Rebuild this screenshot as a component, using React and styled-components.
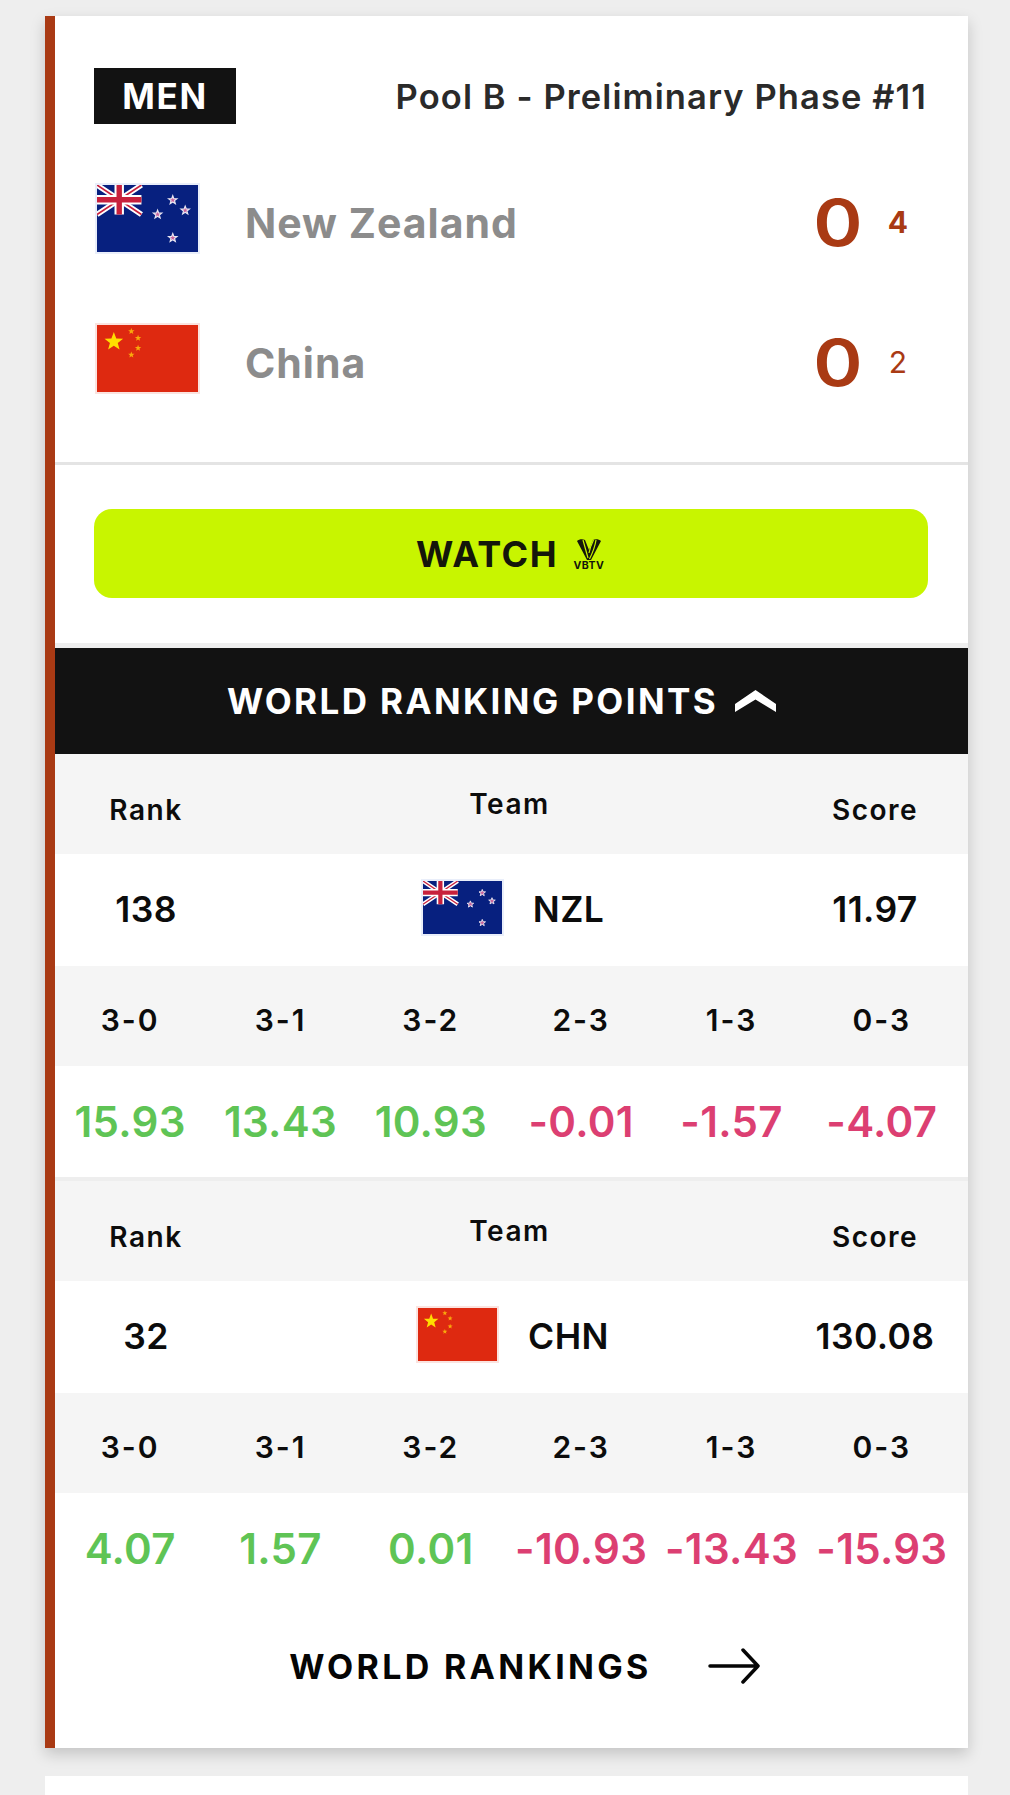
import React from 'react'
import styled, { createGlobalStyle } from 'styled-components'

const GlobalStyle = createGlobalStyle`
  html, body {
    margin: 0;
    padding: 0;
    background: #eeeeee;
  }
  * {
    box-sizing: border-box;
  }
`

const RUST = '#a93a14'

const starPoints = (cx, cy, r) => {
  const pts = []
  for (let i = 0; i < 10; i++) {
    const rad = i % 2 === 0 ? r : r * 0.42
    const a = -Math.PI / 2 + (i * Math.PI) / 5
    pts.push(`${(cx + rad * Math.cos(a)).toFixed(1)},${(cy + rad * Math.sin(a)).toFixed(1)}`)
  }
  return pts.join(' ')
}

const NzFlag = () => (
  <svg viewBox="0 0 300 200" width="100%" height="100%" preserveAspectRatio="none">
    <rect width="300" height="200" fill="#07207f" />
    <path d="M0 0L132 88M132 0L0 88" stroke="#fff" strokeWidth="16" />
    <path d="M0 0L132 88M132 0L0 88" stroke="#c8203c" strokeWidth="5" />
    <path d="M66 0V88M0 44H132" stroke="#fff" strokeWidth="28" />
    <path d="M66 0V88M0 44H132" stroke="#c8203c" strokeWidth="16" />
    {[[225, 45], [180, 88], [262, 76], [225, 158]].map(([x, y]) => (
      <polygon key={x + '-' + y} points={starPoints(x, y, 13)} fill="#c9609a" stroke="#e9e6f2" strokeWidth="3.5" />
    ))}
  </svg>
)

const CnFlag = () => (
  <svg viewBox="0 0 300 200" width="100%" height="100%" preserveAspectRatio="none">
    <rect width="300" height="200" fill="#de2910" />
    <polygon points={starPoints(50, 50, 29)} fill="#ffde00" />
    {[[102, 19], [122, 39], [122, 69], [102, 89]].map(([x, y]) => (
      <polygon key={x + '-' + y} points={starPoints(x, y, 10)} fill="#f9a90c" />
    ))}
  </svg>
)

const FlagBox = styled.div`
  flex: none;
  width: ${(p) => p.$w}px;
  height: ${(p) => p.$h}px;
  margin-bottom: ${(p) => p.$lift || 0}px;
  margin-left: ${(p) => p.$inset || 0}px;
  padding: 2px;
  background: ${(p) => p.$edge};
  line-height: 0;
`

const Page = styled.div`
  width: 1010px;
  height: 1795px;
  overflow: hidden;
  padding: 16px 42px 0 45px;
  font-family: Inter, "Liberation Sans", sans-serif;
`

const Card = styled.div`
  background: #fff;
  border-left: 10px solid ${RUST};
  box-shadow: 0 6px 14px rgba(0, 0, 0, 0.18);
`

const NextCard = styled.div`
  margin-top: 28px;
  height: 60px;
  background: #fff;
`

const Match = styled.div`
  padding: 52px 41px 34px 39px;
`

const MatchTop = styled.div`
  display: flex;
  justify-content: space-between;
  align-items: center;
  margin-bottom: 24px;
`

const GenderTag = styled.div`
  width: 142px;
  height: 56px;
  display: flex;
  align-items: center;
  justify-content: center;
  background: #121212;
  color: #fff;
  font-size: 35px;
  font-weight: 700;
  letter-spacing: 1.6px;
`

const PoolLabel = styled.div`
  font-size: 34.5px;
  font-weight: 600;
  letter-spacing: 1.1px;
  color: #2a2a2a;
`

const TeamRow = styled.div`
  height: 140px;
  display: flex;
  align-items: center;
`

const TeamName = styled.div`
  margin-left: 45px;
  padding-top: 10px;
  flex: 1;
  font-size: 41px;
  font-weight: 700;
  letter-spacing: 1px;
  color: #8c8c8c;
`

const Sets = styled.div`
  width: 64px;
  margin-left: 10px;
  padding-top: 8px;
  text-align: center;
  font-size: 65px;
  font-weight: 600;
  color: ${RUST};
  transform: scaleX(1.15);
`

const Points = styled.div`
  width: 40px;
  margin-left: 8px;
  margin-right: 9px;
  padding-top: 8px;
  text-align: center;
  font-size: 30px;
  font-weight: ${(p) => p.$weight};
  color: ${RUST};
`

const Divider = styled.div`
  height: ${(p) => p.$h}px;
  background: ${(p) => p.$color};
`

const WatchArea = styled.div`
  padding: 44px 40px 45px 39px;
`

const WatchButton = styled.div`
  height: 89px;
  display: flex;
  align-items: center;
  justify-content: center;
  gap: 14px;
  border-radius: 18px;
  background: #c8f500;
  color: #14160a;
  font-size: 36px;
  font-weight: 700;
  letter-spacing: 1.4px;
`

const VbtvMark = styled.div`
  width: 34px;
  display: flex;
  flex-direction: column;
  align-items: center;
  margin-top: 2px;
`

const VbtvText = styled.span`
  font-size: 10.5px;
  line-height: 10px;
  font-weight: 700;
  letter-spacing: 0.5px;
`

const PointsHeader = styled.div`
  height: 106px;
  display: flex;
  align-items: center;
  justify-content: center;
  gap: 17px;
  padding-right: 20px;
  background: #121212;
  color: #fff;
  font-size: 35px;
  font-weight: 700;
  letter-spacing: 2.4px;
`

const InfoRow = styled.div`
  display: grid;
  grid-template-columns: 182px 1fr 186px;
  align-items: center;
  height: ${(p) => p.$h}px;
  background: ${(p) => p.$bg};
  color: #0c0c0c;
  text-align: center;
`

const HeadCell = styled.div`
  font-size: 28px;
  font-weight: 600;
  letter-spacing: 1.5px;
  padding-top: ${(p) => p.$drop}px;
`

const ValueCell = styled.div`
  font-size: 35.5px;
  font-weight: 600;
  letter-spacing: 0.4px;
  padding-bottom: 2px;
`

const TeamCell = styled.div`
  display: flex;
  align-items: center;
  justify-content: center;
  gap: 29px;
  padding: 0 0 2px 6px;
  font-size: 35.5px;
  font-weight: 600;
  letter-spacing: 0.4px;
`

const SixRow = styled.div`
  display: grid;
  grid-template-columns: repeat(6, 1fr);
  align-items: center;
  height: ${(p) => p.$h}px;
  background: ${(p) => p.$bg};
  padding: 0 11px 0 0;
  text-align: center;
`

const ResultLabel = styled.div`
  font-size: 30px;
  font-weight: 600;
  letter-spacing: 2px;
  padding-top: 7px;
  color: #0c0c0c;
`

const PointValue = styled.div`
  font-size: 42px;
  font-weight: 600;
  letter-spacing: 0.3px;
  white-space: nowrap;
  padding-bottom: 1px;
  color: ${(p) => (p.$up ? '#5fc455' : '#dc3f72')};
`

const RankingsLink = styled.div`
  height: ${(p) => p.$h}px;
  display: flex;
  align-items: center;
  justify-content: center;
  gap: 56px;
  padding: 0 0 20px 26px;
  color: #050505;
  font-size: 34px;
  font-weight: 700;
  letter-spacing: 3.3px;
`

const RESULTS = ['3-0', '3-1', '3-2', '2-3', '1-3', '0-3']

const TABLES = [
  {
    rank: '138',
    code: 'NZL',
    score: '11.97',
    Flag: NzFlag,
    edge: '#e9eefa',
    values: ['15.93', '13.43', '10.93', '-0.01', '-1.57', '-4.07'],
  },
  {
    rank: '32',
    code: 'CHN',
    score: '130.08',
    Flag: CnFlag,
    edge: '#fbe3df',
    values: ['4.07', '1.57', '0.01', '-10.93', '-13.43', '-15.93'],
  },
]

const RankingTable = ({ table }) => {
  const { Flag } = table
  return (
    <>
      <InfoRow $h={100} $bg="#f5f5f5">
        <HeadCell $drop={12}>Rank</HeadCell>
        <HeadCell $drop={0}>Team</HeadCell>
        <HeadCell $drop={12}>Score</HeadCell>
      </InfoRow>
      <InfoRow $h={112} $bg="#fff">
        <ValueCell>{table.rank}</ValueCell>
        <TeamCell>
          <FlagBox $w={83} $h={57} $lift={3} $edge={table.edge}>
            <Flag />
          </FlagBox>
          {table.code}
        </TeamCell>
        <ValueCell>{table.score}</ValueCell>
      </InfoRow>
      <SixRow $h={100} $bg="#f5f5f5">
        {RESULTS.map((r) => (
          <ResultLabel key={r}>{r}</ResultLabel>
        ))}
      </SixRow>
      <SixRow $h={111} $bg="#fff">
        {table.values.map((v, i) => (
          <PointValue key={i} $up={!v.startsWith('-')}>
            {v}
          </PointValue>
        ))}
      </SixRow>
    </>
  )
}

const App = () => {
  return (
    <Page>
      <GlobalStyle />
      <Card>
        <Match>
          <MatchTop>
            <GenderTag>MEN</GenderTag>
            <PoolLabel>Pool B - Preliminary Phase #11</PoolLabel>
          </MatchTop>
          <TeamRow>
            <FlagBox $w={105} $h={71} $inset={1} $edge="#e9eefa">
              <NzFlag />
            </FlagBox>
            <TeamName>New Zealand</TeamName>
            <Sets>0</Sets>
            <Points $weight={700}>4</Points>
          </TeamRow>
          <TeamRow>
            <FlagBox $w={105} $h={71} $inset={1} $edge="#fbe3df">
              <CnFlag />
            </FlagBox>
            <TeamName>China</TeamName>
            <Sets>0</Sets>
            <Points $weight={400}>2</Points>
          </TeamRow>
        </Match>
        <Divider $h={3} $color="#e4e4e4" />
        <WatchArea>
          <WatchButton>
            WATCH
            <VbtvMark>
              <svg width="26" height="22" viewBox="0 0 26 22">
                <path d="M1 2C3 0 7 0 9 1L13 11L17 1C19 0 23 0 25 2L15 21H11Z" fill="#14160a" />
                <path d="M7 1L12 19M13 14C14 9 16 4 17.5 1M20 1C19 8 16 15 13.5 20" stroke="#c8f500" strokeWidth="1.2" fill="none" />
              </svg>
              <VbtvText>VBTV</VbtvText>
            </VbtvMark>
          </WatchButton>
        </WatchArea>
        <Divider $h={5} $color="#eeeeee" />
        <PointsHeader>
          WORLD RANKING POINTS
          <svg width="41" height="22" viewBox="0 0 41 22">
            <polygon points="20.5,0 41,14 41,22 20.5,9.5 0,22 0,14" fill="#fff" />
          </svg>
        </PointsHeader>
        <RankingTable table={TABLES[0]} />
        <Divider $h={4} $color="#eeeeee" />
        <RankingTable table={TABLES[1]} />
        <RankingsLink $h={144}>
          WORLD RANKINGS
          <svg width="52" height="36" viewBox="0 0 52 36" fill="none" stroke="#050505" strokeWidth="3.5" strokeLinecap="round" strokeLinejoin="round">
            <path d="M2 18H50M35 2L50 18L35 34" />
          </svg>
        </RankingsLink>
      </Card>
      <NextCard />
    </Page>
  )
}

export default App
